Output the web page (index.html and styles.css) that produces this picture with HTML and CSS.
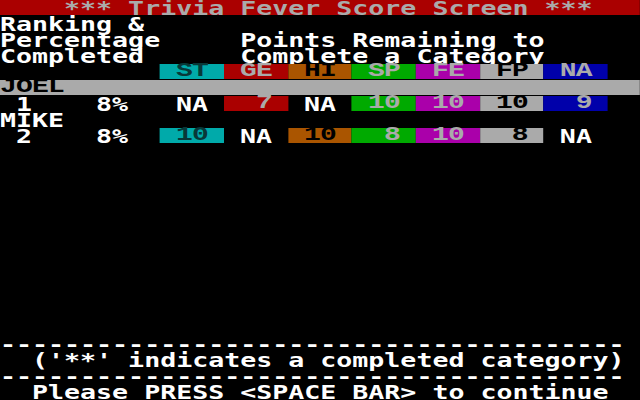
FILE: index.html
```html
<!DOCTYPE html>
<html lang="en">
<head>
<meta charset="utf-8">
<title>Trivia Fever Score Screen</title>
<link rel="stylesheet" href="styles.css">
</head>
<body>
<div class="screen">
  <div class="row title">    *** Trivia Fever Score Screen ***</div>
  <div class="row">Ranking &amp;</div>
  <div class="row">Percentage     Points Remaining to</div>
  <div class="row">Completed      Complete a Category</div>

  <div class="row table">
    <div class="lead"></div><div class="pct"></div>
    <div class="cell st ser"><span class="v">ST</span></div>
    <div class="cell ge ser"><span class="v">GE</span></div>
    <div class="cell hi ser"><span class="v">HI</span></div>
    <div class="cell sp ser"><span class="v">SP</span></div>
    <div class="cell fe ser"><span class="v">FE</span></div>
    <div class="cell fp ser"><span class="v">FP</span></div>
    <div class="cell na ser"><span class="v">NA</span></div>
  </div>

  <div class="row current ser">JOEL</div>
  <div class="row table">
    <div class="lead"> 1</div><div class="pct">8%</div>
    <div class="cell"><span class="v">NA</span></div>
    <div class="cell ge ser"><span class="v">7</span></div>
    <div class="cell"><span class="v">NA</span></div>
    <div class="cell sp ser"><span class="v">10</span></div>
    <div class="cell fe ser"><span class="v">10</span></div>
    <div class="cell fp ser"><span class="v">10</span></div>
    <div class="cell na ser"><span class="v">9</span></div>
  </div>

  <div class="row">MIKE</div>
  <div class="row table">
    <div class="lead"> 2</div><div class="pct">8%</div>
    <div class="cell st ser"><span class="v">10</span></div>
    <div class="cell"><span class="v">NA</span></div>
    <div class="cell hi ser"><span class="v">10</span></div>
    <div class="cell sp ser"><span class="v">8</span></div>
    <div class="cell fe ser"><span class="v">10</span></div>
    <div class="cell fp ser"><span class="v">8</span></div>
    <div class="cell"><span class="v">NA</span></div>
  </div>

  <div class="spacer"></div>

  <div class="row">---------------------------------------</div>
  <div class="row">  ('**' indicates a completed category)</div>
  <div class="row">---------------------------------------</div>
  <div class="row">  Please PRESS &lt;SPACE BAR&gt; to continue</div>
</div>
</body>
</html>
```

FILE: styles.css
```css
html, body {
  margin: 0;
  padding: 0;
  background: #000;
  overflow: hidden;
}

.screen {
  --c: 11.428571px;
  width: 457.142857px;
  height: 400px;
  transform: scaleX(1.4);
  transform-origin: 0 0;
  display: flex;
  flex-direction: column;
  background: #000;
  color: #fff;
  font-family: "DejaVu Sans Mono", "Liberation Mono", monospace;
  font-weight: bold;
  font-size: 19px;
  line-height: 16px;
}

.row {
  height: 16px;
  white-space: pre;
  flex: none;
}

.title {
  height: 15px;
  margin-bottom: 1px;
  background: #aa0000;
  color: #aaaaaa;
}

.table {
  display: grid;
  grid-template-columns: calc(var(--c) * 6) calc(var(--c) * 4) repeat(7, calc(var(--c) * 4));
}

.lead, .pct {
  white-space: pre;
}

.cell {
  height: 15px;
  padding-left: var(--c);
}

.cell .v {
  display: inline-block;
  width: calc(var(--c) * 2);
  text-align: right;
}

.ser {
  font-family: "Liberation Mono", "Courier New", monospace;
  font-weight: bold;
  font-size: 20px;
  line-height: 10px;
  padding-top: 2px;
  box-sizing: border-box;
  letter-spacing: -0.57px;
}

.st { background: #00aaaa; color: #083838; }
.ge { background: #aa0000; color: #aaaaaa; }
.hi { background: #aa5500; color: #000; }
.sp { background: #00aa00; color: #aaaaaa; }
.fe { background: #aa00aa; color: #aaaaaa; }
.fp { background: #aaaaaa; color: #000; }
.na { background: #0000aa; color: #aaaaaa; }

.current {
  height: 15px;
  margin-bottom: 1px;
  background: #aaaaaa;
  color: #000;
}

.spacer {
  flex: 1;
}
```
